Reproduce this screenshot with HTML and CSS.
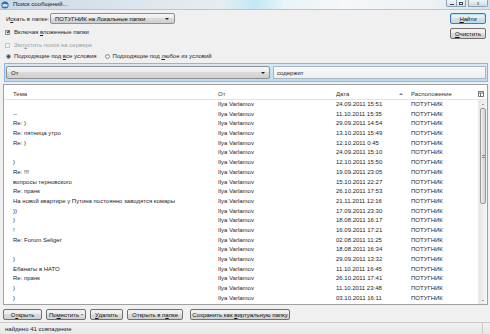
FILE: index.html
```html
<!DOCTYPE html>
<html lang="ru">

<head>
    <meta charset="UTF-8">
    <title>Поиск сообщений...</title>
    <link rel="stylesheet" href="styles.css">
</head>

<body>
    <div class="window">
        <div class="titlebar">
            <svg class="app-icon" width="8" height="8" viewBox="0 0 8 8">
                <circle cx="4" cy="4" r="3.6" fill="#2a6fb8" />
                <path d="M1.6 3h4.8v2.6H1.6z" fill="#fff" />
                <path d="M1.6 3l2.4 1.5L6.4 3" fill="none" stroke="#2a6fb8" stroke-width="0.5" />
            </svg>
            <span class="title">Поиск сообщений...</span>
            <div class="controls">
                <span class="ctl min"><i></i></span>
                <span class="ctl max"><i></i></span>
                <span class="ctl close">x</span>
            </div>
        </div>

        <div class="content">
            <div class="top">
                <div class="options">
                    <div class="folder-row">
                        <span class="label">И<u>с</u>кать в папке:</span>
                        <div class="select folder-select"><span>ПОТУГНИК на Локальные папки</span> <span class="arrow"></span></div>
                    </div>
                    <div class="check-row"><span class="box checked"></span><span>Включая <u>в</u>ложенные папки</span></div>
                    <div class="check-row disabled"><span class="box"></span><span>Зап<u>у</u>стить поиск на сервере</span></div>
                    <div class="radio-row">
                        <span class="radio on"></span><span>Подходящие под <u>в</u>се условия</span>
                        <span class="radio second"></span><span>Подходящие под <u>л</u>юбое из условий</span>
                    </div>
                </div>
                <div class="actions">
                    <span class="btn default"><span><u>Н</u>айти</span></span>
                    <span class="btn"><span><u>О</u>чистить</span></span>
                </div>
            </div>

            <div class="condition">
                <div class="select field-select"><span>От</span> <span class="arrow"></span></div>
                <div class="field-input">содержит</div>
            </div>

            <div class="list">
                <div class="list-head">
                    <span class="cell subject">Тема</span>
                    <span class="cell">От</span>
                    <span class="cell date"><span>Дата</span> <span class="sort"></span></span>
                    <span class="cell">Расположение</span>
                    <span class="picker">
                        <svg width="6" height="6" viewBox="0 0 6 6">
                            <path d="M0.5 0.5h5v5h-5z M0.5 2h5 M2.5 2v3.5" fill="none" stroke="#555" stroke-width="0.8" />
                        </svg>
                    </span>
                </div>
                <div class="list-body">
                    <div class="rows">
                        <div class="row"><span class="cell subject"></span><span class="cell">Ilya Varlamov</span><span class="cell">24.09.2011 15:51</span><span class="cell">ПОТУГНИК</span></div>
                        <div class="row"><span class="cell subject">--</span><span class="cell">Ilya Varlamov</span><span class="cell">11.10.2011 15:35</span><span class="cell">ПОТУГНИК</span></div>
                        <div class="row"><span class="cell subject">Re: )</span><span class="cell">Ilya Varlamov</span><span class="cell">29.09.2011 14:54</span><span class="cell">ПОТУГНИК</span></div>
                        <div class="row"><span class="cell subject">Re: пятница утро</span><span class="cell">Ilya Varlamov</span><span class="cell">13.10.2011 15:49</span><span class="cell">ПОТУГНИК</span></div>
                        <div class="row"><span class="cell subject">Re: )</span><span class="cell">Ilya Varlamov</span><span class="cell">12.10.2011 0:45</span><span class="cell">ПОТУГНИК</span></div>
                        <div class="row"><span class="cell subject"></span><span class="cell">Ilya Varlamov</span><span class="cell">24.09.2011 15:10</span><span class="cell">ПОТУГНИК</span></div>
                        <div class="row"><span class="cell subject">)</span><span class="cell">Ilya Varlamov</span><span class="cell">12.10.2011 15:50</span><span class="cell">ПОТУГНИК</span></div>
                        <div class="row"><span class="cell subject">Re: !!!</span><span class="cell">Ilya Varlamov</span><span class="cell">19.09.2011 23:05</span><span class="cell">ПОТУГНИК</span></div>
                        <div class="row"><span class="cell subject">вопросы терновского</span><span class="cell">Ilya Varlamov</span><span class="cell">15.10.2011 22:27</span><span class="cell">ПОТУГНИК</span></div>
                        <div class="row"><span class="cell subject">Re: пранк</span><span class="cell">Ilya Varlamov</span><span class="cell">26.10.2011 17:53</span><span class="cell">ПОТУГНИК</span></div>
                        <div class="row"><span class="cell subject">На новой квартире у Путина постоянно заводятся комары</span><span class="cell">Ilya Varlamov</span><span class="cell">21.11.2011 12:16</span><span class="cell">ПОТУГНИК</span></div>
                        <div class="row"><span class="cell subject">))</span><span class="cell">Ilya Varlamov</span><span class="cell">17.09.2011 23:30</span><span class="cell">ПОТУГНИК</span></div>
                        <div class="row"><span class="cell subject">)</span><span class="cell">Ilya Varlamov</span><span class="cell">18.08.2011 16:17</span><span class="cell">ПОТУГНИК</span></div>
                        <div class="row"><span class="cell subject">!</span><span class="cell">Ilya Varlamov</span><span class="cell">16.09.2011 17:21</span><span class="cell">ПОТУГНИК</span></div>
                        <div class="row"><span class="cell subject">Re: Forum Seliger</span><span class="cell">Ilya Varlamov</span><span class="cell">02.08.2011 11:25</span><span class="cell">ПОТУГНИК</span></div>
                        <div class="row"><span class="cell subject"></span><span class="cell">Ilya Varlamov</span><span class="cell">18.08.2011 16:34</span><span class="cell">ПОТУГНИК</span></div>
                        <div class="row"><span class="cell subject">)</span><span class="cell">Ilya Varlamov</span><span class="cell">29.09.2011 13:32</span><span class="cell">ПОТУГНИК</span></div>
                        <div class="row"><span class="cell subject">Ебанаты в НАТО</span><span class="cell">Ilya Varlamov</span><span class="cell">11.10.2011 16:45</span><span class="cell">ПОТУГНИК</span></div>
                        <div class="row"><span class="cell subject">Re: пранк</span><span class="cell">Ilya Varlamov</span><span class="cell">26.10.2011 17:41</span><span class="cell">ПОТУГНИК</span></div>
                        <div class="row"><span class="cell subject">)</span><span class="cell">Ilya Varlamov</span><span class="cell">11.10.2011 23:48</span><span class="cell">ПОТУГНИК</span></div>
                        <div class="row"><span class="cell subject">)</span><span class="cell">Ilya Varlamov</span><span class="cell">03.10.2011 16:11</span><span class="cell">ПОТУГНИК</span></div>
                    </div>
                    <div class="scrollbar">
                        <span class="sb-arrow up"></span>
                        <span class="thumb"><i></i></span>
                        <span class="sb-space"></span>
                        <span class="sb-arrow down"></span>
                    </div>
                </div>
            </div>

            <div class="buttons">
                <span class="btn b-open"><span>О<u>т</u>крыть</span></span>
                <span class="btn b-move"><span>По<u>м</u>естить</span> <span class="drop"></span></span>
                <span class="btn b-del"><span><u>У</u>далить</span></span>
                <span class="btn b-folder"><span>Открыть в п<u>а</u>пке</span></span>
                <span class="btn b-save"><span>Сохранить как <u>в</u>иртуальную папку</span></span>
            </div>
        </div>

        <div class="status">
            <span class="status-text">найдено 41 совпадение</span>
            <span class="grip"></span>
        </div>
    </div>
</body>

</html>
```

FILE: styles.css
```css
* {
    box-sizing: border-box;
}

body {
    margin: 0;
    font-family: "Liberation Sans", "DejaVu Sans", sans-serif;
    font-size: 6px;
    color: #1e1e1e;
}

u {
    text-decoration-thickness: 0.5px;
    text-underline-offset: 1px;
}

.window {
    display: flex;
    flex-direction: column;
    width: 490px;
    height: 334px;
    overflow: hidden;
    background-color: #f0f0f0;
}

/* заголовок окна */
.titlebar {
    display: flex;
    align-items: center;
    height: 10px;
    padding-left: 1px;
    background: linear-gradient(90deg, #c9d7e4 0%, #dfe7ee 30%, #e6edf2 45%, #c2e8f6 52%, #e9f4f8 58%, #f5f7f8 70%, #eef2f5 88%, #d3e1ec 100%);
    border-bottom: 1px solid #b8c4cf;
}

.app-icon {
    display: block;
}

.title {
    margin-left: 4px;
    color: #1a1a1a;
    line-height: 9px;
}

.controls {
    display: flex;
    align-self: flex-start;
    margin-left: auto;
    margin-right: 2px;
}

.ctl {
    display: flex;
    align-items: center;
    justify-content: center;
    width: 10px;
    height: 7px;
    border: 1px solid #8fa2b5;
    border-top: none;
    background: linear-gradient(#f2f6f9, #d6e0e9);
    font-size: 5px;
    line-height: 5px;
    color: #3c4a58;
}

.ctl.min {
    border-radius: 0 0 0 2px;
    border-right: none;
}

.ctl.min i {
    width: 4px;
    height: 1px;
    margin-top: 2px;
    background-color: #3c4a58;
}

.ctl.max i {
    width: 4px;
    height: 3px;
    border: 1px solid #3c4a58;
    border-top-width: 1.5px;
}

.ctl.close {
    width: 20px;
    margin-left: 2px;
    border-radius: 0 0 2px 0;
    background: linear-gradient(#eef5fa, #c8dbe8);
}

/* верхняя часть */
.content {
    display: flex;
    flex-direction: column;
    flex: 1;
}

.top {
    display: flex;
    height: 52px;
}

.options {
    flex: 1;
    padding-left: 5px;
}

.folder-row {
    display: flex;
    align-items: center;
    height: 11px;
    margin-top: 3px;
}

.label {
    width: 44px;
    margin-left: 1px;
    white-space: nowrap;
}

.select {
    position: relative;
    display: flex;
    align-items: center;
    border: 1px solid #8e8f8f;
    border-radius: 2px;
    background: linear-gradient(#f6f6f6 0%, #ebebeb 45%, #dbdbdb 50%, #cfcfcf 100%);
    white-space: nowrap;
}

.folder-select {
    width: 125px;
    height: 11px;
    padding-left: 4px;
    color: #111;
}

.arrow {
    margin-left: auto;
    margin-right: 5px;
    width: 0;
    height: 0;
    border-left: 2px solid transparent;
    border-right: 2px solid transparent;
    border-top: 2px solid #222;
}

.check-row,
.radio-row {
    display: flex;
    align-items: center;
    height: 10px;
    line-height: 10px;
    white-space: nowrap;
}

.check-row {
    margin-top: 3px;
}

.check-row.disabled {
    color: #a0a0a0;
}

.radio-row {
    margin-top: 1px;
}

.box {
    width: 5px;
    height: 5px;
    margin-right: 4px;
    border: 1px solid #8e8f8f;
    background: linear-gradient(#dcdcdc, #fff);
}

.box.checked {
    position: relative;
    background: #f4f4f4;
}

.box.checked::after {
    content: "";
    position: absolute;
    left: 0.5px;
    top: -0.5px;
    width: 1.2px;
    height: 2.4px;
    border-right: 1px solid #2b3b4d;
    border-bottom: 1px solid #2b3b4d;
    transform: rotate(40deg);
}

.check-row.disabled .box {
    border-color: #c7c7c7;
    background: #f4f4f4;
}

.radio {
    width: 5px;
    height: 5px;
    margin-left: 1px;
    margin-right: 3px;
    border: 1px solid #8e8f8f;
    border-radius: 50%;
    background: linear-gradient(#dcdcdc, #fff);
}

.radio.on {
    background: radial-gradient(circle, #2a4e78 0 1.2px, #eaeaea 1.6px);
}

.radio.second {
    margin-left: 8px;
}

.actions {
    display: flex;
    flex-direction: column;
    gap: 4px;
    width: 40px;
    padding-top: 3px;
}

.btn {
    display: flex;
    align-items: center;
    justify-content: center;
    height: 11px;
    border: 1px solid #707070;
    border-radius: 2px;
    background: linear-gradient(#f2f2f2 0%, #ebebeb 45%, #dddddd 50%, #cfcfcf 100%);
    color: #111;
    white-space: nowrap;
}

.actions .btn {
    width: 36px;
}

.btn.default {
    border-color: #3c7fb1;
    box-shadow: inset 0 0 0 1px #aee0f8;
}

/* строка условия */
.condition {
    display: flex;
    gap: 3px;
    height: 19px;
    margin: 1px 2px 0 4px;
    padding: 2px 1px 2px 1px;
    border: 1px solid #84b8e8;
    background: linear-gradient(#d5eaf9, #bcdcf3);
}

.field-select {
    width: 264px;
    padding-left: 4px;
}

.field-select .arrow {
    margin-right: 4px;
}

.field-input {
    flex: 1;
    display: flex;
    align-items: center;
    padding-left: 3px;
    border: 1px solid #a9b6c2;
    background: linear-gradient(#fafafa, #eeeeee);
}

/* список */
.list {
    display: flex;
    flex-direction: column;
    height: 221px;
    margin: 2px 2px 0 3px;
    border: 1px solid #a0a0a0;
    background-color: #fff;
}

.list-head,
.row {
    display: grid;
    grid-template-columns: 214px 118px 75px 1fr;
}

.list-head {
    grid-template-columns: 214px 118px 75px 1fr 9px;
    height: 15px;
    padding-top: 4px;
    line-height: 10px;
    border-bottom: 1px solid #e3e3e3;
    color: #333;
}

.cell {
    white-space: nowrap;
    overflow: hidden;
}

.cell.subject {
    padding-left: 9px;
}

.cell.date {
    display: flex;
    align-items: center;
}

.sort {
    margin-left: auto;
    margin-right: 8px;
    width: 0;
    height: 0;
    border-left: 2px solid transparent;
    border-right: 2px solid transparent;
    border-bottom: 2px solid #6a7a8a;
}

.picker {
    display: flex;
    align-items: center;
}

.list-body {
    display: flex;
    flex: 1;
}

.rows {
    flex: 1;
}

.row {
    height: 9.69px;
    line-height: 9.69px;
}

.scrollbar {
    display: flex;
    flex-direction: column;
    width: 9px;
    background: linear-gradient(90deg, #e6e6e6, #f5f5f5);
    border-left: 1px solid #ececec;
}

.sb-arrow {
    display: flex;
    justify-content: center;
    align-items: center;
    height: 8px;
}

.sb-arrow::after {
    content: "";
    border-left: 1.5px solid transparent;
    border-right: 1.5px solid transparent;
}

.sb-arrow.up::after {
    border-bottom: 1.5px solid #505050;
}

.sb-arrow.down::after {
    border-top: 1.5px solid #505050;
}

.thumb {
    display: flex;
    align-items: center;
    justify-content: center;
    height: 96px;
    margin: 0 1px;
    border: 1px solid #9a9a9a;
    border-radius: 2px;
    background: linear-gradient(90deg, #f0f0f0, #e0e0e0 50%, #d2d2d2);
}

.thumb i {
    width: 3px;
    height: 3px;
    border-top: 1px solid #8a8a8a;
    border-bottom: 1px solid #8a8a8a;
}

.sb-space {
    flex: 1;
}

/* кнопки снизу */
.buttons {
    display: flex;
    gap: 4px;
    margin-top: 4px;
    padding-left: 3px;
}

.b-open {
    width: 39px;
}

.b-move {
    width: 40px;
}

.drop {
    margin-left: 2px;
    width: 0;
    height: 0;
    border-left: 1.5px solid transparent;
    border-right: 1.5px solid transparent;
    border-top: 1.5px solid #222;
}

.b-del {
    width: 33px;
}

.b-folder {
    width: 56px;
}

.b-save {
    width: 100px;
    margin-left: 3px;
}

/* строка состояния */
.status {
    display: flex;
    align-items: center;
    height: 12px;
    border-top: 1px solid #c9c9c9;
    background: linear-gradient(#f2f2f2, #e6e6e6);
}

.status-text {
    flex: 1;
    padding-left: 5px;
}

.grip {
    align-self: stretch;
    width: 8px;
    border-left: 1px solid #c9c9c9;
}
```
